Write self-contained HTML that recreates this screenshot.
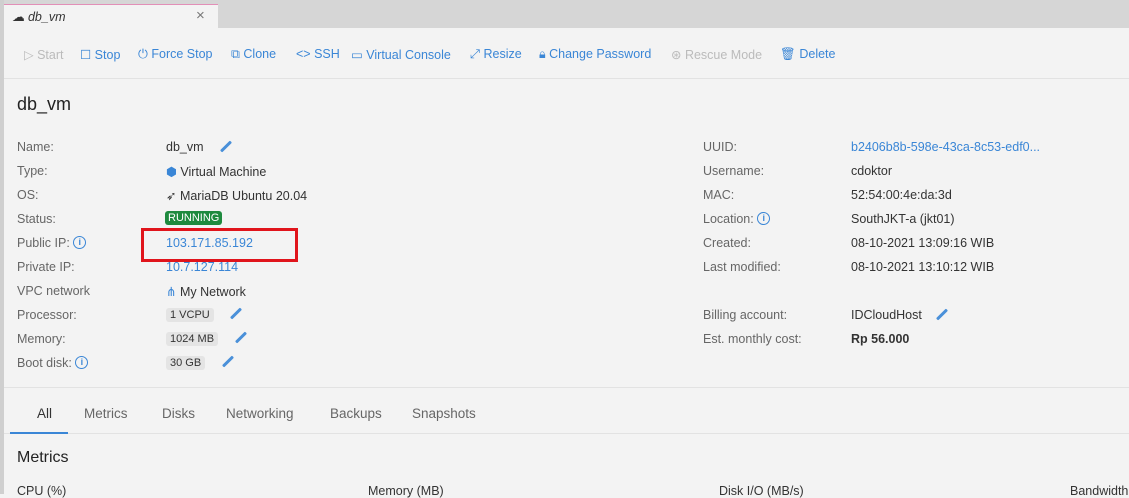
<!DOCTYPE html>
<html><head><style>
body{margin:0;width:1129px;height:494px;overflow:hidden;background:#f3f3f3;font-family:"Liberation Sans",sans-serif;font-size:12.5px;color:#333;position:relative}
.a{position:absolute;white-space:nowrap}
.tb{color:#3a86d6}
.lbl{color:#666}
.blue{color:#3a86d6}
.chip{background:#e4e4e4;border-radius:3px;padding:1px 4px;font-size:11px}
.pen{display:inline-block;width:14px;height:3px;background:#4a90d9;transform:rotate(-45deg);border-radius:1px}
.info{display:inline-block;box-sizing:border-box;width:13px;height:13px;border:1.3px solid #3a86d6;border-radius:50%;color:#3a86d6;font-size:9px;text-align:center;line-height:11px;font-weight:bold;vertical-align:middle;margin-top:-3px}
</style></head><body>
<div class="a" style="left:0;top:0;width:1129px;height:28px;background:#d6d6d6"></div>
<div class="a" style="left:4px;top:4px;width:214px;height:24px;background:#f3f3f3;border-top:1px solid #e28fb7"></div>
<div class="a" style="left:0;top:0;width:4px;height:494px;background:#cfcfcf"></div>
<div class="a" style="left:12px;top:9px;font-style:italic;font-size:12.5px">☁ db_vm</div>
<div class="a" style="left:196px;top:7px;font-size:15px;color:#777">×</div>

<div class="a" style="left:24px;top:47px;color:#bbb">▷ Start</div>
<div class="a tb" style="left:80px;top:47px">☐ Stop</div>
<div class="a tb" style="left:138px;top:47px">⏻ Force Stop</div>
<div class="a tb" style="left:231px;top:47px">⧉ Clone</div>
<div class="a tb" style="left:296px;top:47px">&lt;&gt; SSH</div>
<div class="a tb" style="left:351px;top:47px">▭ Virtual Console</div>
<div class="a tb" style="left:470px;top:47px">⤢ Resize</div>
<div class="a tb" style="left:539px;top:47px">🔒︎ Change Password</div>
<div class="a" style="left:671px;top:47px;color:#bbb">⊛ Rescue Mode</div>
<div class="a tb" style="left:780px;top:47px">🗑︎ Delete</div>
<div class="a" style="left:4px;top:78px;width:1125px;height:1px;background:#e2e2e2"></div>

<div class="a" style="left:17px;top:94px;font-size:18px;color:#222">db_vm</div>

<div class="a lbl" style="left:17px;top:140px">Name:</div><div class="a" style="left:166px;top:140px">db_vm <span class="pen" style="margin-left:12px;vertical-align:3px"></span></div>
<div class="a lbl" style="left:17px;top:164px">Type:</div><div class="a" style="left:166px;top:164px"><span style="color:#3a86d6">⬢</span> Virtual Machine</div>
<div class="a lbl" style="left:17px;top:188px">OS:</div><div class="a" style="left:166px;top:188px">➶ MariaDB Ubuntu 20.04</div>
<div class="a lbl" style="left:17px;top:212px">Status:</div><div class="a" style="left:165px;top:211px;background:#1e8a3e;color:#fff;font-size:11px;padding:1px 3px;border-radius:3px">RUNNING</div>
<div class="a lbl" style="left:17px;top:236px">Public IP: <span class="info">i</span></div><div class="a blue" style="left:166px;top:236px">103.171.85.192</div>
<div class="a" style="left:141px;top:228px;width:151px;height:28px;border:3px solid #e0141b"></div>
<div class="a lbl" style="left:17px;top:260px">Private IP:</div><div class="a blue" style="left:166px;top:260px">10.7.127.114</div>
<div class="a lbl" style="left:17px;top:284px">VPC network</div><div class="a" style="left:166px;top:284px"><span style="color:#3a86d6">⋔</span> My Network</div>
<div class="a lbl" style="left:17px;top:308px">Processor:</div><div class="a" style="left:166px;top:307px"><span class="chip">1 VCPU</span> <span class="pen" style="margin-left:12px;vertical-align:3px"></span></div>
<div class="a lbl" style="left:17px;top:332px">Memory:</div><div class="a" style="left:166px;top:331px"><span class="chip">1024 MB</span> <span class="pen" style="margin-left:12px;vertical-align:3px"></span></div>
<div class="a lbl" style="left:17px;top:356px">Boot disk: <span class="info">i</span></div><div class="a" style="left:166px;top:355px"><span class="chip">30 GB</span> <span class="pen" style="margin-left:12px;vertical-align:3px"></span></div>

<div class="a lbl" style="left:703px;top:140px">UUID:</div><div class="a blue" style="left:851px;top:140px">b2406b8b-598e-43ca-8c53-edf0...</div>
<div class="a lbl" style="left:703px;top:164px">Username:</div><div class="a" style="left:851px;top:164px">cdoktor</div>
<div class="a lbl" style="left:703px;top:188px">MAC:</div><div class="a" style="left:851px;top:188px">52:54:00:4e:da:3d</div>
<div class="a lbl" style="left:703px;top:212px">Location: <span class="info">i</span></div><div class="a" style="left:851px;top:212px">SouthJKT-a (jkt01)</div>
<div class="a lbl" style="left:703px;top:236px">Created:</div><div class="a" style="left:851px;top:236px">08-10-2021 13:09:16 WIB</div>
<div class="a lbl" style="left:703px;top:260px">Last modified:</div><div class="a" style="left:851px;top:260px">08-10-2021 13:10:12 WIB</div>
<div class="a lbl" style="left:703px;top:308px">Billing account:</div><div class="a" style="left:851px;top:308px">IDCloudHost <span class="pen" style="margin-left:10px;vertical-align:3px"></span></div>
<div class="a lbl" style="left:703px;top:332px">Est. monthly cost:</div><div class="a" style="left:851px;top:332px;font-weight:bold">Rp 56.000</div>

<div class="a" style="left:4px;top:387px;width:1125px;height:1px;background:#e2e2e2"></div>
<div class="a" style="left:37px;top:406px;font-size:13.5px">All</div>
<div class="a lbl" style="left:84px;top:406px;font-size:13.5px">Metrics</div>
<div class="a lbl" style="left:162px;top:406px;font-size:13.5px">Disks</div>
<div class="a lbl" style="left:226px;top:406px;font-size:13.5px">Networking</div>
<div class="a lbl" style="left:330px;top:406px;font-size:13.5px">Backups</div>
<div class="a lbl" style="left:412px;top:406px;font-size:13.5px">Snapshots</div>
<div class="a" style="left:4px;top:433px;width:1125px;height:1px;background:#e2e2e2"></div>
<div class="a" style="left:10px;top:432px;width:58px;height:2px;background:#3a86d6"></div>
<div class="a" style="left:17px;top:449px;font-size:16px;color:#222">Metrics</div>
<div class="a" style="left:17px;top:484px">CPU (%)</div>
<div class="a" style="left:368px;top:484px">Memory (MB)</div>
<div class="a" style="left:719px;top:484px">Disk I/O (MB/s)</div>
<div class="a" style="left:1070px;top:484px">Bandwidth</div>
</body></html>
